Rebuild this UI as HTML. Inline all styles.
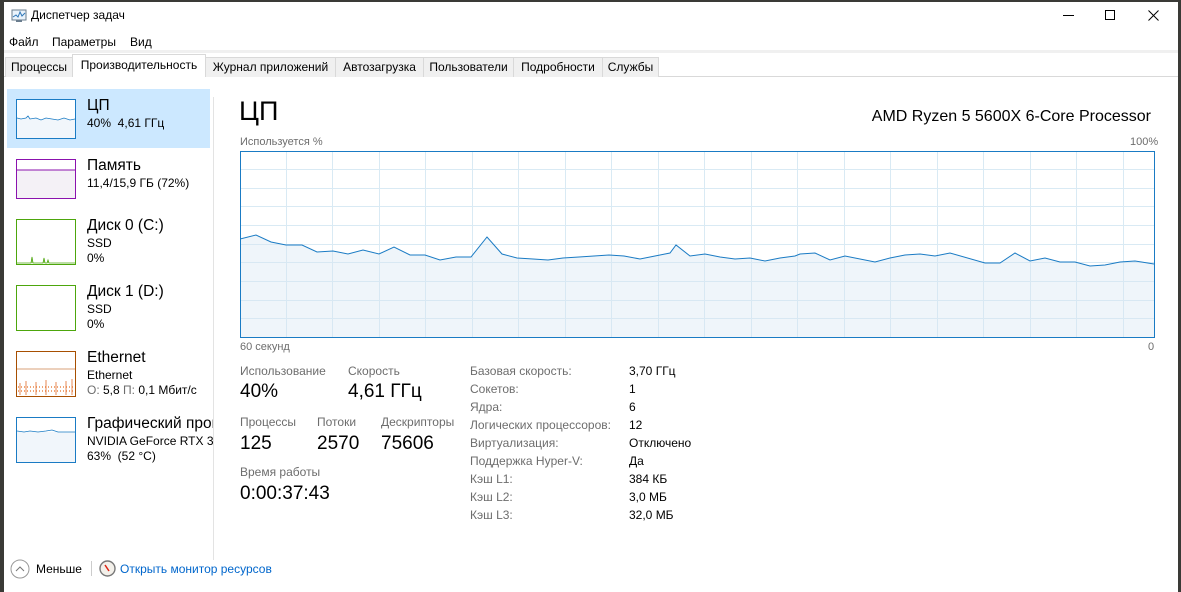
<!DOCTYPE html>
<html><head><meta charset="utf-8"><style>
*{margin:0;padding:0;box-sizing:border-box}
body{width:1181px;height:592px;overflow:hidden;background:#3a3a36;font-family:"Segoe UI","Liberation Sans",sans-serif;position:relative;color:#000}
.win{position:absolute;left:4px;top:2px;width:1174px;height:590px;background:#fff}
.a{position:absolute;white-space:nowrap}
.t{font-size:12px}
.tab{position:absolute;top:57px;height:20px;background:#f0f0f0;border:1px solid #d9d9d9;border-bottom:none;font-size:12px;line-height:18px;text-align:center}
.g{color:#6d6d6d}
.th{position:absolute;left:16px;width:60px}
.h{font-size:15.5px}
</style></head><body>
<div class="win"></div>
<!-- title -->
<svg class="a" style="left:11px;top:9px" width="16" height="14"><rect x="1" y="1" width="14" height="10" fill="#eaf3fb" stroke="#6a7d8e"/><polyline points="2,8 5,6 7,8 9,3 11,7 14,4" fill="none" stroke="#2f77b8"/><rect x="5" y="11" width="6" height="2" fill="#6a7d8e"/></svg>
<div class="a t" style="left:31px;top:8px;font-size:12px">Диспетчер задач</div>
<div class="a" style="left:1063px;top:15px;width:11px;height:1px;background:#000"></div>
<div class="a" style="left:1105px;top:10px;width:10px;height:10px;border:1px solid #000"></div>
<svg class="a" style="left:1148px;top:10px" width="11" height="11"><path d="M0.5 0.5L10.5 10.5M10.5 0.5L0.5 10.5" stroke="#000" stroke-width="1"/></svg>
<div class="a t" style="left:9px;top:35px">Файл</div>
<div class="a t" style="left:52px;top:35px">Параметры</div>
<div class="a t" style="left:130px;top:35px">Вид</div>
<div class="a" style="left:4px;top:50px;width:1174px;height:3px;background:#f0f0f0"></div>
<!-- tabs -->
<div class="a" style="left:4px;top:76px;width:1174px;height:1px;background:#d9d9d9"></div>
<div class="tab" style="left:5px;width:68px">Процессы</div>
<div class="tab" style="left:72px;top:54px;height:23px;width:134px;background:#fff;line-height:20px">Производительность</div>
<div class="tab" style="left:205px;width:131px">Журнал приложений</div>
<div class="tab" style="left:335px;width:89px">Автозагрузка</div>
<div class="tab" style="left:423px;width:91px">Пользователи</div>
<div class="tab" style="left:513px;width:90px">Подробности</div>
<div class="tab" style="left:602px;width:57px">Службы</div>
<!-- sidebar -->
<div class="a" style="left:7px;top:89px;width:203px;height:59px;background:#cce8ff"></div>
<div class="a" style="left:213px;top:97px;width:1px;height:463px;background:#e3e3e3"></div>
<svg class="th a" style="top:99px" width="60" height="40"><rect x="0.5" y="0.5" width="59" height="39" fill="#fff" stroke="#1a7bc4"/><polygon points="1,19 5,20 10,19 12,17 14,20 20,19 25,21 30,19 36,20 42,21 48,19 54,21 59,20 59,39 1,39" fill="#f1f6fb"/><polyline points="1,19 5,20 10,19 12,17 14,20 20,19 25,21 30,19 36,20 42,21 48,19 54,21 59,20" fill="none" stroke="#1a7bc4" stroke-width="0.8"/></svg>
<div class="a h" style="left:87px;top:97px">ЦП</div>
<div class="a t" style="left:87px;top:116px">40%&nbsp; 4,61 ГГц</div>
<svg class="th a" style="top:159px" width="60" height="40"><rect x="0.5" y="0.5" width="59" height="39" fill="#f4f1f6" stroke="#8b12ae"/><rect x="1" y="1" width="58" height="10" fill="#fff"/><line x1="1" y1="11" x2="59" y2="11" stroke="#8b12ae"/></svg>
<div class="a h" style="left:87px;top:157px">Память</div>
<div class="a t" style="left:87px;top:176px">11,4/15,9 ГБ (72%)</div>
<svg class="th a" style="top:219px" width="60" height="46"><rect x="0.5" y="0.5" width="59" height="45" fill="#fff" stroke="#4da60c"/><polyline points="1,44 15,44 16,38 17,44 27,44 28,39 29,44 31,44 32,41 33,44 59,44" fill="#b5dd97" stroke="#4da60c" stroke-width="0.8"/></svg>
<div class="a h" style="left:87px;top:217px">Диск 0 (C:)</div>
<div class="a t" style="left:87px;top:236px">SSD</div>
<div class="a t" style="left:87px;top:251px">0%</div>
<svg class="th a" style="top:285px" width="60" height="46"><rect x="0.5" y="0.5" width="59" height="45" fill="#fff" stroke="#4da60c"/></svg>
<div class="a h" style="left:87px;top:283px">Диск 1 (D:)</div>
<div class="a t" style="left:87px;top:302px">SSD</div>
<div class="a t" style="left:87px;top:317px">0%</div>
<svg class="th a" style="top:351px" width="60" height="46"><rect x="0.5" y="0.5" width="59" height="45" fill="#fff" stroke="#a74f01"/><line x1="1" y1="18" x2="59" y2="18" stroke="#d9a27a"/><path d="M2 36H58M2 40H58" stroke="#e8874a" stroke-width="1.5" stroke-dasharray="1 2"/><path d="M4 32V44M10 30V44M20 31V44M30 29V44M40 31V44M50 30V44M56 28V44" stroke="#e26c2a" stroke-width="0.8"/></svg>
<div class="a h" style="left:87px;top:349px">Ethernet</div>
<div class="a t" style="left:87px;top:368px">Ethernet</div>
<div class="a t" style="left:87px;top:383px"><span class="g">О:</span> 5,8 <span class="g">П:</span> 0,1 Мбит/с</div>
<svg class="th a" style="top:417px" width="60" height="46"><rect x="0.5" y="0.5" width="59" height="45" fill="#fff" stroke="#1a7bc4"/><polygon points="1,15 59,15 59,45 1,45" fill="#f1f6fb"/><polyline points="1,14 8,15 14,14 22,15 30,14 36,13 42,15 59,15" fill="none" stroke="#1a7bc4" stroke-width="0.8"/></svg>
<div class="a h" style="left:87px;top:415px;width:126px;overflow:hidden">Графический процессор</div>
<div class="a t" style="left:87px;top:434px;width:126px;overflow:hidden">NVIDIA GeForce RTX 3060</div>
<div class="a t" style="left:87px;top:449px">63%&nbsp; (52 °C)</div>
<!-- main -->
<div class="a" style="left:239px;top:95px;font-size:27px;line-height:32px">ЦП</div>
<div class="a" style="right:30px;top:108px;font-size:16px">AMD Ryzen 5 5600X 6-Core Processor</div>
<div class="a g" style="left:240px;top:136px;font-size:11px">Используется %</div>
<div class="a g" style="left:1130px;top:136px;font-size:11px">100%</div>
<svg class="a" style="left:240px;top:151px" width="915" height="187">
<rect x="0" y="0" width="915" height="187" fill="#fff"/>
<g stroke="#d9eaf4" stroke-width="1">
<path d="M46.5 0V187M92.5 0V187M139.5 0V187M185.5 0V187M232.5 0V187M278.5 0V187M325.5 0V187M371.5 0V187M418.5 0V187M464.5 0V187M511.5 0V187M557.5 0V187M604.5 0V187M650.5 0V187M697.5 0V187M743.5 0V187M790.5 0V187M836.5 0V187M883.5 0V187"/>
<path d="M0 18.5H915M0 37.5H915M0 55.5H915M0 74.5H915M0 93.5H915M0 111.5H915M0 130.5H915M0 149.5H915M0 167.5H915"/>
</g>
<polygon fill="rgba(214,230,242,0.4)" stroke="none" points="0,88 16,84 31,91 46,94 62,94 77,101 93,100 108,103 123,99 139,103 154,96 170,104 185,104 200,109 216,106 231,106 247,86 262,103 277,107 293,108 308,109 323,107 339,106 354,105 369,104 384,105 400,108 415,105 430,102 436,94 450,105 465,103 480,106 495,108 510,107 525,110 540,107 555,105 560,103 575,102 590,109 605,105 635,111 650,107 665,104 680,103 695,105 710,102 745,112 760,112 775,102 790,110 805,107 820,111 835,111 850,115 865,114 880,111 895,110 914,113 914,186 0,186"/>
<polyline fill="none" stroke="#1a7bc4" stroke-width="1" points="0,88 16,84 31,91 46,94 62,94 77,101 93,100 108,103 123,99 139,103 154,96 170,104 185,104 200,109 216,106 231,106 247,86 262,103 277,107 293,108 308,109 323,107 339,106 354,105 369,104 384,105 400,108 415,105 430,102 436,94 450,105 465,103 480,106 495,108 510,107 525,110 540,107 555,105 560,103 575,102 590,109 605,105 635,111 650,107 665,104 680,103 695,105 710,102 745,112 760,112 775,102 790,110 805,107 820,111 835,111 850,115 865,114 880,111 895,110 914,113"/>
<rect x="0.5" y="0.5" width="914" height="186" fill="none" stroke="#1a7bc4"/>
</svg>
<div class="a g" style="left:240px;top:341px;font-size:11px">60 секунд</div>
<div class="a g" style="left:1148px;top:341px;font-size:11px">0</div>
<div class="a g" style="left:240px;top:364px;font-size:12px">Использование</div>
<div class="a g" style="left:348px;top:364px;font-size:12px">Скорость</div>
<div class="a" style="left:240px;top:381px;font-size:19px">40%</div>
<div class="a" style="left:348px;top:381px;font-size:19px">4,61 ГГц</div>
<div class="a g" style="left:240px;top:415px;font-size:12px">Процессы</div>
<div class="a g" style="left:317px;top:415px;font-size:12px">Потоки</div>
<div class="a g" style="left:381px;top:415px;font-size:12px">Дескрипторы</div>
<div class="a" style="left:240px;top:433px;font-size:19px">125</div>
<div class="a" style="left:317px;top:433px;font-size:19px">2570</div>
<div class="a" style="left:381px;top:433px;font-size:19px">75606</div>
<div class="a g" style="left:240px;top:465px;font-size:12px">Время работы</div>
<div class="a" style="left:240px;top:483px;font-size:19px">0:00:37:43</div>
<div class="a g t" style="left:470px;top:362px;line-height:18px">Базовая скорость:<br>Сокетов:<br>Ядра:<br>Логических процессоров:<br>Виртуализация:<br>Поддержка Hyper-V:<br>Кэш L1:<br>Кэш L2:<br>Кэш L3:</div>
<div class="a t" style="left:629px;top:362px;line-height:18px">3,70 ГГц<br>1<br>6<br>12<br>Отключено<br>Да<br>384 КБ<br>3,0 МБ<br>32,0 МБ</div>
<!-- footer -->
<svg class="a" style="left:10px;top:559px" width="20" height="20"><circle cx="10" cy="10" r="9" fill="#fff" stroke="#999"/><polyline points="6,12 10,8 14,12" fill="none" stroke="#777"/></svg>
<div class="a t" style="left:36px;top:562px">Меньше</div>
<div class="a" style="left:91px;top:561px;width:1px;height:15px;background:#ccc"></div>
<svg class="a" style="left:99px;top:560px" width="17" height="17"><circle cx="8.5" cy="8.5" r="7.5" fill="#f3f0ea" stroke="#777" stroke-width="1.4"/><line x1="6" y1="5" x2="10" y2="11" stroke="#d21" stroke-width="1.5"/></svg>
<div class="a t" style="left:120px;top:562px;color:#0066cc">Открыть монитор ресурсов</div>
</body></html>
